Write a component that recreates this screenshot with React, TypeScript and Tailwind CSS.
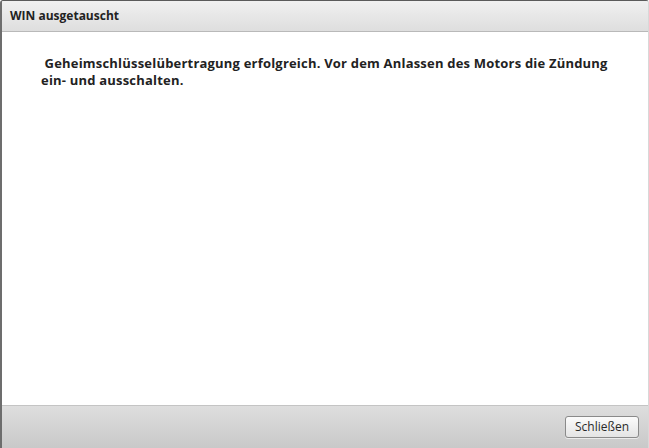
export default function App() {
  return (
    <div
      className="flex h-[448px] w-[649px] flex-col overflow-hidden rounded-t-[3px] border-t border-l-2 border-r border-t-[#5a5a5a] border-l-[#6d6d6d] border-r-[#d8d8d8] bg-white text-[#1a1a1a]"
      style={{ fontFamily: '"Open Sans", "DejaVu Sans", sans-serif' }}
    >
      {/* Title bar */}
      <div className="flex h-[31px] shrink-0 items-center border-b border-[#b9b9b9] bg-gradient-to-b from-[#f0f0f0] to-[#dedede] pl-[8px] text-[12px] font-bold text-[#222]">
        WIN ausgetauscht
      </div>

      {/* Message */}
      <div className="flex-1 pt-[23px] pl-[39px] text-[13px] leading-[17px] font-bold tracking-[0.2px] text-[#222]">
        &nbsp;Geheimschlüsselübertragung erfolgreich. Vor dem Anlassen des Motors die Zündung
        <br />
        ein- und ausschalten.
      </div>

      {/* Footer */}
      <div className="flex h-[43px] shrink-0 items-center justify-end border-t border-[#c4c4c4] bg-gradient-to-b from-[#dedede] to-[#c9c9c9] pr-[9px]">
        <button
          type="button"
          className="h-[22px] w-[74px] rounded-[3px] border border-[#8a8a8a] bg-gradient-to-b from-[#fbfbfb] to-[#e4e4e4] text-[12px] text-[#2a2a2a] shadow-[0_1px_0_rgba(255,255,255,0.6)]"
        >
          Schließen
        </button>
      </div>
    </div>
  );
}
